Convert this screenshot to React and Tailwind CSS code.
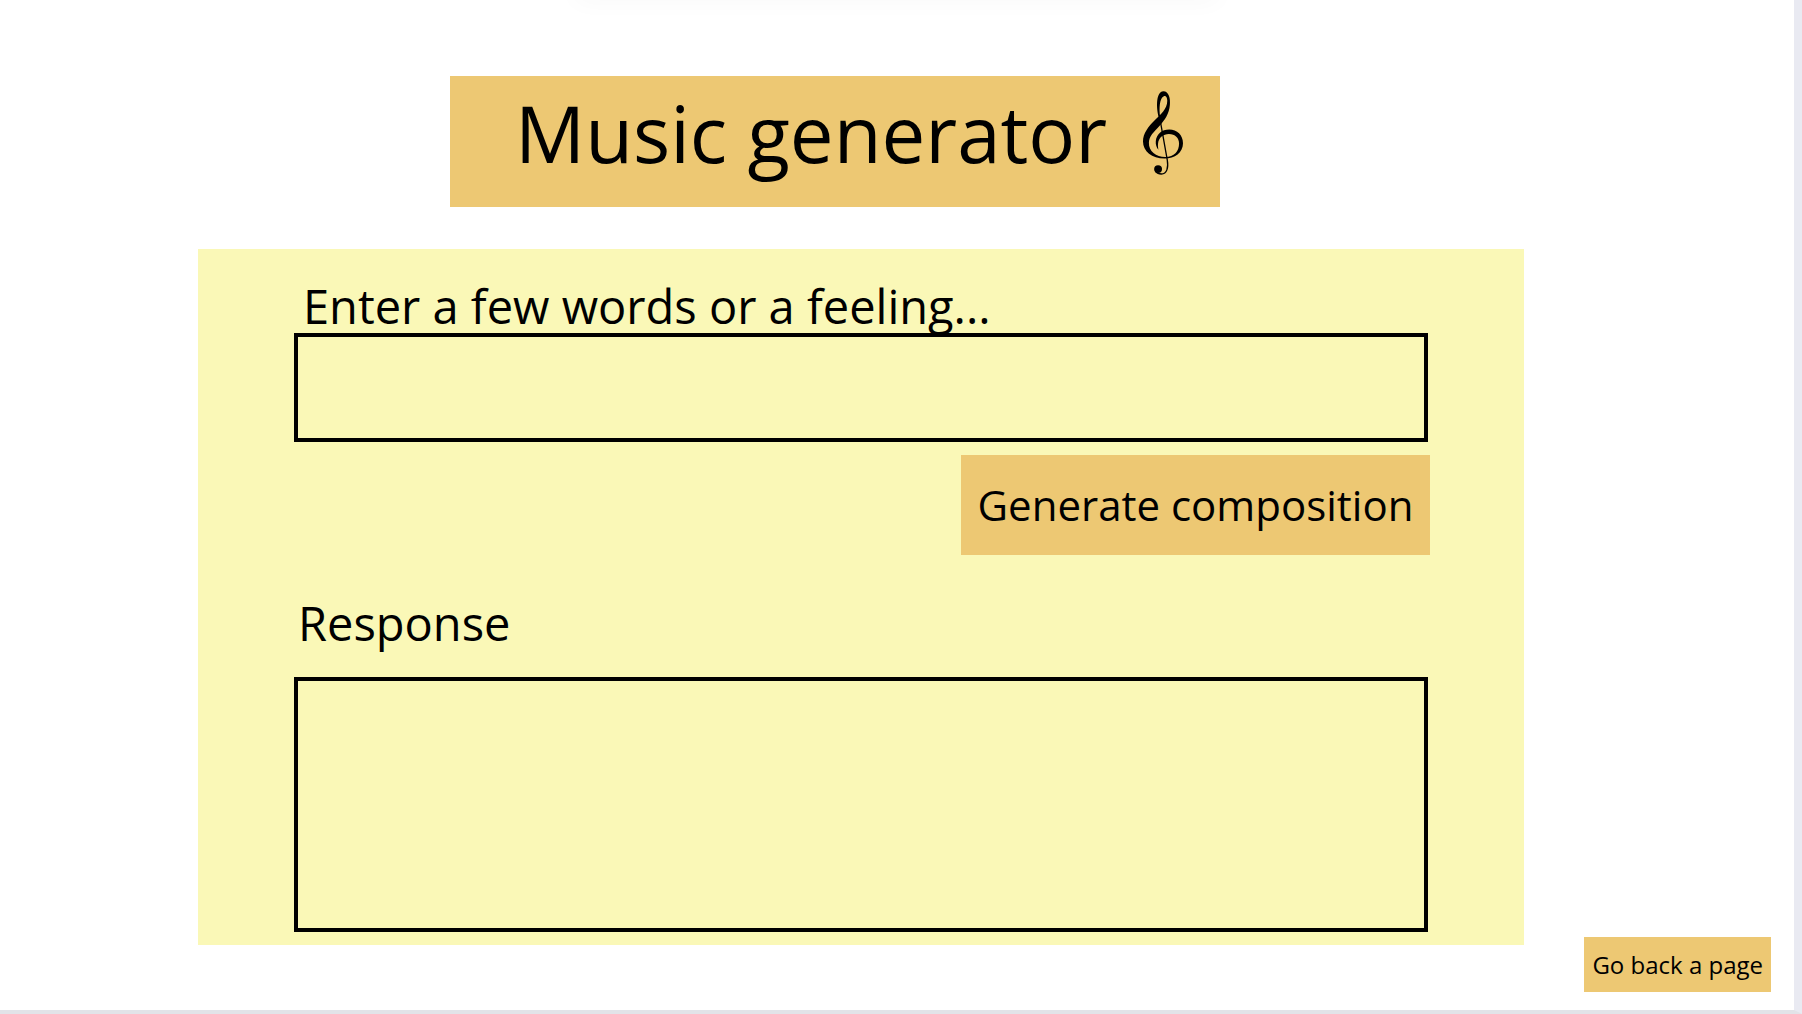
function TrebleClef() {
  return (
    <svg viewBox="68 57 122 254" className="h-[84px] w-10 shrink-0" aria-hidden="true">
      <path
        fill="#000"
        d="M117 140C107 105 108 58 130 57C147 57 152 80 150 98C148 125 135 144 118 163C101 181 87 194 86 213C85 240 108 257 136 257C163 257 178 240 178 216C178 199 166 187 147 187C130 187 116 198 114 215C113 222 114 228 115 235C109 228 106 218 107 209C109 187 125 173 148 173C172 173 190 190 190 215C190 243 165 262 134 262C95 262 68 240 68 210C68 185 85 164 103 146C122 127 142 112 142 86C142 75 138 70 133 71C122 74 117 95 119 125L121 140Z"
      />
      <path
        fill="none"
        stroke="#000"
        strokeWidth="4"
        d="M118 132L142 266C146 290 141 309 124 309C116 309 110 306 106 301"
      />
      <circle cx="114" cy="294" r="12" fill="#000" />
    </svg>
  );
}

export default function App() {
  return (
    <div className="relative flex min-h-screen flex-col overflow-hidden border-r-8 border-b-4 border-r-[#e9eaf2] border-b-[#e2e3e8] bg-white font-['Open_Sans',sans-serif] text-black">
      <div className="absolute -top-4 left-[32%] right-[32%] h-4 rounded-full shadow-[0_0_24px_rgba(0,0,0,0.04)]" />

      <header className="mt-[76px] mr-[32%] ml-[450px] flex h-[131px] items-center justify-between bg-[#edc873] pr-[37px] pb-[18px] pl-[65px]">
        <h1 className="text-[78px] leading-[80px] whitespace-nowrap">Music generator</h1>
        <TrebleClef />
      </header>

      <div className="mt-[42px] ml-[198px] flex flex-1 items-end">
        <main className="mb-[65px] flex flex-1 flex-col self-stretch bg-[#faf8b7] px-24 pt-[33px] pb-[13px]">
          <label htmlFor="prompt" className="mb-[3px] pl-[9px] text-[47px] leading-[48px]">
            Enter a few words or a feeling...
          </label>
          <input
            id="prompt"
            type="text"
            className="h-[109px] w-full border-4 border-black bg-transparent px-4 text-[42px] outline-none"
          />
          <button
            type="button"
            className="-mr-0.5 mt-[13px] h-[100px] self-end bg-[#edc873] px-[17px] text-[42px] leading-[48px] whitespace-nowrap"
          >
            Generate composition
          </button>
          <label htmlFor="response" className="mt-11 mb-[30px] pl-1 text-[47px] leading-[48px]">
            Response
          </label>
          <textarea
            id="response"
            readOnly
            className="min-h-[160px] w-full flex-1 resize-none border-4 border-black bg-transparent p-4 text-2xl outline-none"
          />
        </main>
        <button
          type="button"
          className="mr-[23px] mb-[18px] ml-[60px] h-[55px] bg-[#edc873] px-2 text-2xl whitespace-nowrap"
        >
          Go back a page
        </button>
      </div>
    </div>
  );
}
